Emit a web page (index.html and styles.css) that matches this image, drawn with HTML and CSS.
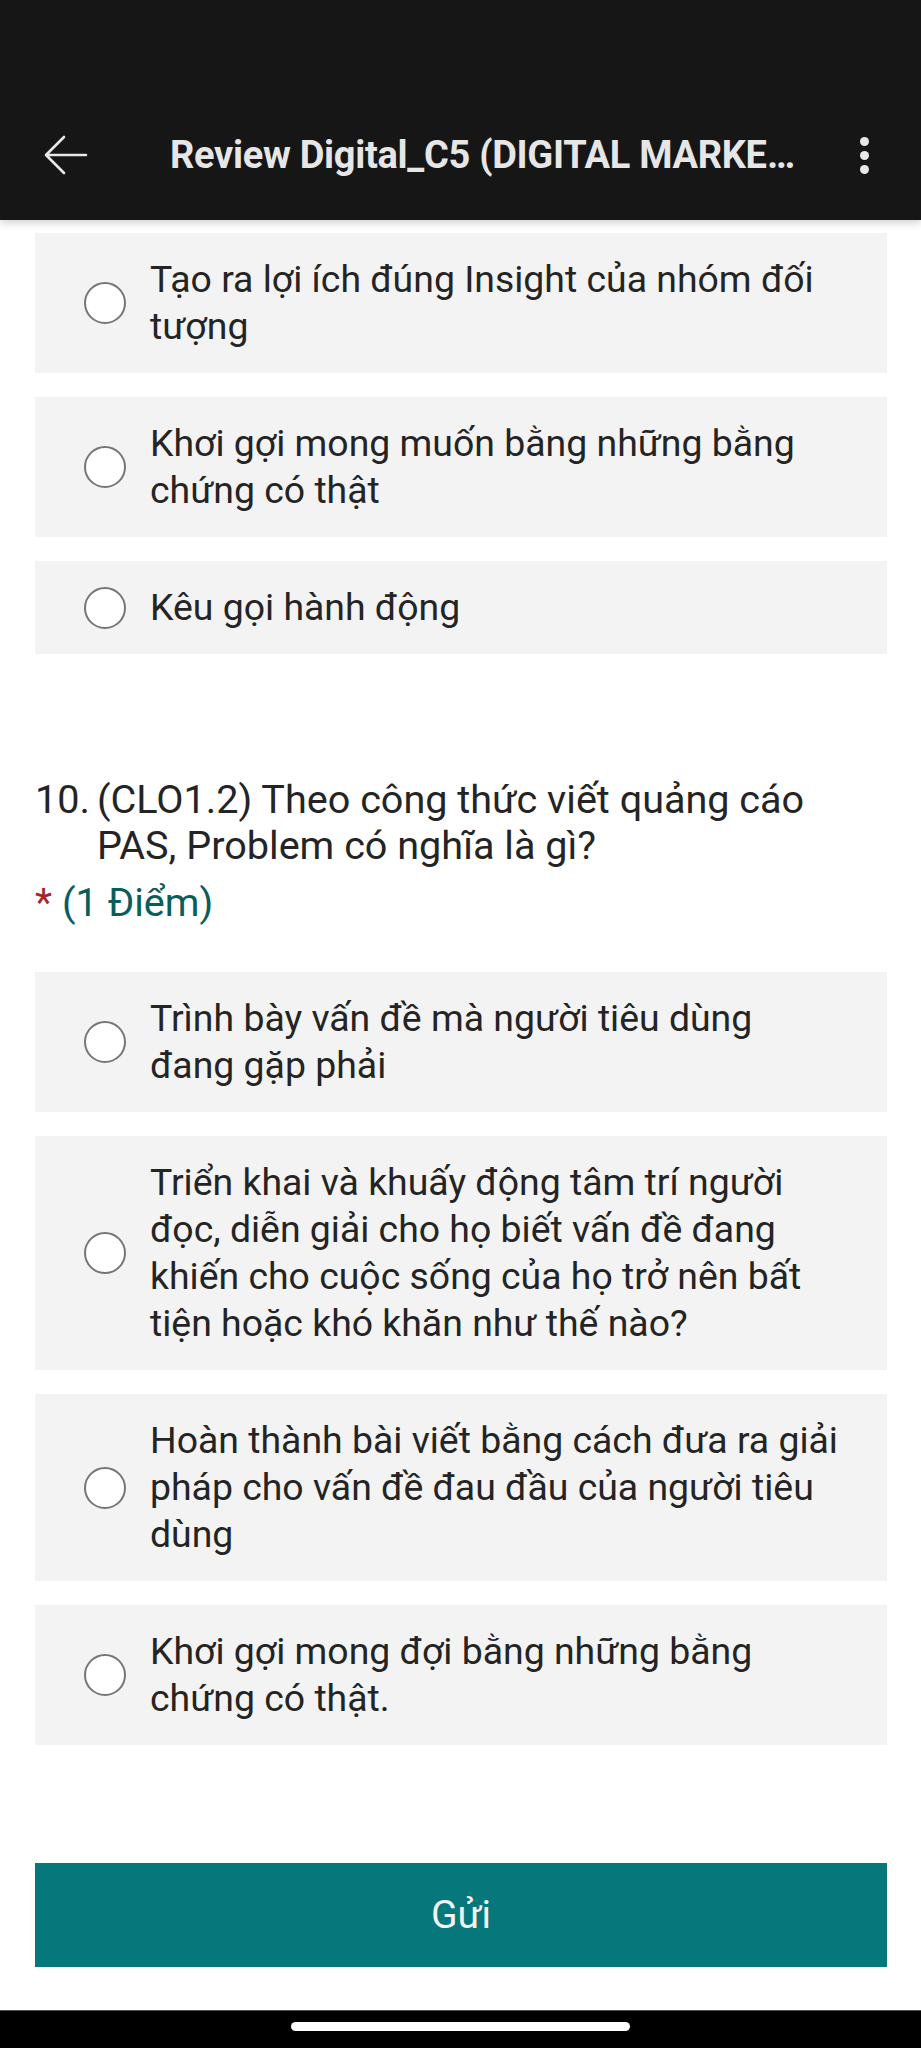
FILE: index.html
```html
<!DOCTYPE html>
<html lang="vi">
<head>
<meta charset="utf-8">
<title>Review Digital_C5</title>
<link rel="stylesheet" href="styles.css">
</head>
<body>
<div class="screen">
  <header class="appbar">
    <div class="toolbar">
      <svg class="back" viewBox="0 0 44 40" width="44" height="40" aria-hidden="true">
        <path d="M42 20H3M20 2L2 20l18 18" fill="none" stroke="#e8e8e8" stroke-width="2.6" stroke-linecap="round" stroke-linejoin="round"/>
      </svg>
      <h1 class="title">Review Digital_C5 (DIGITAL MARKETING)</h1>
      <div class="kebab" aria-label="More"><span></span><span></span><span></span></div>
    </div>
  </header>

  <main class="content">
    <div class="options">
      <label class="option"><span class="radio"></span><span class="opt-text">Tạo ra lợi ích đúng Insight của nhóm đối tượng</span></label>
      <label class="option"><span class="radio"></span><span class="opt-text">Khơi gợi mong muốn bằng những bằng chứng có thật</span></label>
      <label class="option"><span class="radio"></span><span class="opt-text">Kêu gọi hành động</span></label>
    </div>

    <section class="question">
      <div class="q-title"><span class="q-num">10.</span><span class="q-text">(CLO1.2) Theo công thức viết quảng cáo PAS, Problem có nghĩa là gì?</span></div>
      <div class="q-points"><span class="req">*</span><span class="pts">(1 Điểm)</span></div>
      <div class="options q-options">
        <label class="option"><span class="radio"></span><span class="opt-text">Trình bày vấn đề mà người tiêu dùng đang gặp phải</span></label>
        <label class="option"><span class="radio"></span><span class="opt-text">Triển khai và khuấy động tâm trí người đọc, diễn giải cho họ biết vấn đề đang khiến cho cuộc sống của họ trở nên bất tiện hoặc khó khăn như thế nào?</span></label>
        <label class="option"><span class="radio"></span><span class="opt-text">Hoàn thành bài viết bằng cách đưa ra giải pháp cho vấn đề đau đầu của người tiêu dùng</span></label>
        <label class="option"><span class="radio"></span><span class="opt-text">Khơi gợi mong đợi bằng những bằng chứng có thật.</span></label>
      </div>
    </section>

    <button class="submit" type="button">Gửi</button>
  </main>

  <div class="navbar"><span class="pill"></span></div>
</div>
</body>
</html>
```

FILE: styles.css
```css
* { box-sizing: border-box; }

html, body {
  margin: 0;
  padding: 0;
  background: #ffffff;
}

body {
  font-family: Roboto, "Noto Sans", "Liberation Sans", sans-serif;
  color: #242424;
}

.screen {
  width: 921px;
  height: 2048px;
  display: flex;
  flex-direction: column;
  overflow: hidden;
}

.appbar {
  flex: none;
  height: 220px;
  background: #161616;
  display: flex;
  align-items: flex-end;
  position: relative;
  z-index: 2;
  box-shadow: 0 3px 8px rgba(0, 0, 0, 0.18);
}

.toolbar {
  width: 100%;
  height: 130px;
  display: flex;
  align-items: center;
  padding-left: 44px;
}

.back {
  flex: none;
  display: block;
}

.title {
  flex: 1;
  min-width: 0;
  margin: 0 40px 0 82px;
  font-size: 38px;
  font-weight: 700;
  color: #e6e6e6;
  white-space: nowrap;
  overflow: hidden;
  text-overflow: ellipsis;
  letter-spacing: -0.3px;
}

.kebab {
  flex: none;
  width: 40px;
  margin-right: 37px;
  display: flex;
  flex-direction: column;
  align-items: center;
  gap: 5px;
}

.kebab span {
  width: 9px;
  height: 9px;
  border-radius: 50%;
  background: #e8e8e8;
}

.content {
  flex: 1;
  min-height: 0;
  overflow: hidden;
  padding: 13px 34px 0 35px;
}

.options {
  display: flex;
  flex-direction: column;
  gap: 24px;
}

.option {
  display: flex;
  align-items: center;
  gap: 24px;
  background: #f3f3f3;
  padding: 23px 44px 23px 49px;
}

.radio {
  flex: none;
  width: 42px;
  height: 42px;
  border-radius: 50%;
  border: 2.5px solid #767676;
  background: #ffffff;
}

.opt-text {
  flex: 1;
  font-size: 37.4px;
  line-height: 47px;
  color: #242424;
}

.question {
  margin-top: 123px;
}

.q-title {
  display: flex;
  font-size: 39.6px;
  line-height: 46px;
  color: #242424;
  padding-right: 30px;
}

.q-num {
  flex: none;
  width: 62px;
}

.q-text {
  flex: 1;
}

.q-points {
  margin-top: 11px;
  font-size: 39.6px;
  line-height: 46px;
}

.req {
  color: #a4262c;
  margin-right: 10px;
}

.pts {
  color: #0b5d5c;
}

.q-options {
  margin-top: 46px;
}

.submit {
  display: block;
  width: 100%;
  height: 104px;
  margin-top: 118px;
  border: 0;
  background: #06777a;
  color: #f2f2f2;
  font-family: Roboto, "Noto Sans", "Liberation Sans", sans-serif;
  font-size: 39px;
  padding: 0;
}

.navbar {
  flex: none;
  height: 38px;
  background: #000000;
  border-top: 1px solid #555555;
  display: flex;
  justify-content: center;
  padding-top: 11px;
}

.pill {
  width: 339px;
  height: 9px;
  border-radius: 5px;
  background: #ffffff;
}
```
